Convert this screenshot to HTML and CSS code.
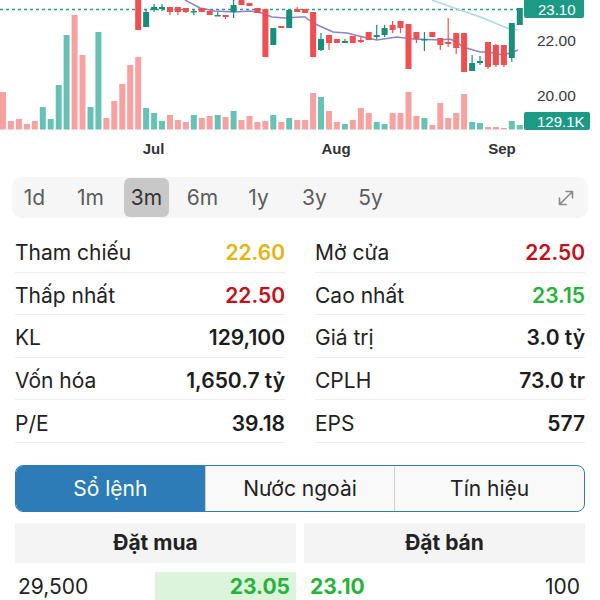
FILE: index.html
```html
<!DOCTYPE html>
<html lang="vi">
<head>
<meta charset="utf-8">
<title>Cổ phiếu</title>
<link rel="stylesheet" href="styles.css">
</head>
<body>
<div class="screen">
  <svg class="chart" viewBox="0 0 600 170" width="600" height="170">
    <g class="vol-down">
      <rect x="0" y="92" width="6" height="37.5"/>
      <rect x="7.9" y="121" width="6" height="8.5"/>
      <rect x="15.9" y="119" width="6" height="10.5"/>
      <rect x="23.9" y="124" width="6" height="5.5"/>
      <rect x="31.8" y="121" width="6" height="8.5"/>
      <rect x="71.6" y="15" width="6" height="114.5"/>
      <rect x="79.5" y="55" width="6" height="74.5"/>
      <rect x="103.4" y="118" width="6" height="11.5"/>
      <rect x="111.3" y="101" width="6" height="28.5"/>
      <rect x="119.3" y="84" width="6" height="45.5"/>
      <rect x="127.2" y="65" width="6" height="64.5"/>
      <rect x="135.2" y="57" width="6" height="72.5"/>
      <rect x="167" y="115" width="6" height="14.5"/>
      <rect x="174.9" y="120" width="6" height="9.5"/>
      <rect x="182.9" y="122" width="6" height="7.5"/>
      <rect x="198.8" y="118" width="6" height="11.5"/>
      <rect x="206.7" y="116" width="6" height="13.5"/>
      <rect x="222.6" y="117" width="6" height="12.5"/>
      <rect x="238.5" y="120" width="6" height="9.5"/>
      <rect x="246.5" y="116" width="6" height="13.5"/>
      <rect x="254.4" y="122" width="6" height="7.5"/>
      <rect x="262.4" y="121" width="6" height="8.5"/>
      <rect x="278.3" y="122" width="6" height="7.5"/>
      <rect x="294.2" y="120" width="6" height="9.5"/>
      <rect x="302.1" y="120" width="6" height="9.5"/>
      <rect x="310.1" y="93" width="6" height="36.5"/>
      <rect x="326" y="111" width="6" height="18.5"/>
      <rect x="333.9" y="122" width="6" height="7.5"/>
      <rect x="349.8" y="120" width="6" height="9.5"/>
      <rect x="357.8" y="108" width="6" height="21.5"/>
      <rect x="365.7" y="113" width="6" height="16.5"/>
      <rect x="389.6" y="113" width="6" height="16.5"/>
      <rect x="397.5" y="113" width="6" height="16.5"/>
      <rect x="405.5" y="92" width="6" height="37.5"/>
      <rect x="413.4" y="116" width="6" height="13.5"/>
      <rect x="429.3" y="125" width="6" height="4.5"/>
      <rect x="437.3" y="103" width="6" height="26.5"/>
      <rect x="445.2" y="118" width="6" height="11.5"/>
      <rect x="453.2" y="113" width="6" height="16.5"/>
      <rect x="461.1" y="94" width="6" height="35.5"/>
      <rect x="485" y="127" width="6" height="2.5"/>
      <rect x="492.9" y="127" width="6" height="2.5"/>
      <rect x="500.9" y="128" width="6" height="1.5"/>
    </g>
    <g class="vol-up">
      <rect x="39.8" y="107" width="6" height="22.5"/>
      <rect x="47.7" y="119" width="6" height="10.5"/>
      <rect x="55.7" y="85" width="6" height="44.5"/>
      <rect x="63.6" y="35" width="6" height="94.5"/>
      <rect x="87.5" y="107" width="6" height="22.5"/>
      <rect x="95.4" y="32" width="6" height="97.5"/>
      <rect x="143.1" y="108" width="6" height="21.5"/>
      <rect x="151.1" y="113" width="6" height="16.5"/>
      <rect x="159" y="121" width="6" height="8.5"/>
      <rect x="190.8" y="115" width="6" height="14.5"/>
      <rect x="214.7" y="115" width="6" height="14.5"/>
      <rect x="230.6" y="111" width="6" height="18.5"/>
      <rect x="270.3" y="115" width="6" height="14.5"/>
      <rect x="286.2" y="118" width="6" height="11.5"/>
      <rect x="318" y="97" width="6" height="32.5"/>
      <rect x="341.9" y="124" width="6" height="5.5"/>
      <rect x="373.7" y="122" width="6" height="7.5"/>
      <rect x="381.6" y="124" width="6" height="5.5"/>
      <rect x="421.4" y="118" width="6" height="11.5"/>
      <rect x="469.1" y="122" width="6" height="7.5"/>
      <rect x="477" y="123" width="6" height="6.5"/>
      <rect x="508.8" y="121" width="6" height="8.5"/>
      <rect x="516.8" y="125" width="6" height="4.5"/>
    </g>

    <line class="last-price" x1="0" y1="9.5" x2="522" y2="9.5"/>

    <polyline class="ma-slow" points="432,0 460,10 483,18 507,28 518,30"/>
    <polyline class="ma-fast" points="185,0 200,8 215,11 235,12 250,11 262,13 272,17 285,18 300,17 305,17 313,23 333,32 347,33 367,38 377,40 390,38 397,37 413,39 440,40 450,39 457,42 463,47 480,52 488,52 503,55 510,53 518,50"/>

    <g class="candle-down">
      <path class="wick" d="M170 7V15M177.9 7V15M185.9 8V13M225.6 15V19M297.2 7V12M329 43V50M360.8 37V43M392.6 21V33M400.5 21V33M416.4 32V43M440.3 38V50M448.2 18V47M456.2 33V54M488 42V69M495.9 44V67M503.9 45V67"/>
      <rect x="135.2" y="-5" width="6" height="35"/>
      <rect x="167" y="7" width="6" height="5"/>
      <rect x="174.9" y="7" width="6" height="5"/>
      <rect x="182.9" y="8" width="6" height="4"/>
      <rect x="198.8" y="8" width="6" height="4"/>
      <rect x="206.7" y="11" width="6" height="4"/>
      <rect x="222.6" y="15" width="6" height="2"/>
      <rect x="238.5" y="-2" width="6" height="7"/>
      <rect x="246.5" y="3" width="6" height="3"/>
      <rect x="254.4" y="8" width="6" height="5"/>
      <rect x="262.4" y="9" width="6" height="48"/>
      <rect x="278.3" y="26" width="6" height="2"/>
      <rect x="294.2" y="9" width="6" height="3"/>
      <rect x="302.1" y="9" width="6" height="4"/>
      <rect x="310.1" y="12" width="6" height="45"/>
      <rect x="326" y="35" width="6" height="8"/>
      <rect x="333.9" y="39" width="6" height="4"/>
      <rect x="349.8" y="36" width="6" height="7"/>
      <rect x="357.8" y="40" width="6" height="2"/>
      <rect x="365.7" y="32" width="6" height="8"/>
      <rect x="389.6" y="25" width="6" height="5"/>
      <rect x="397.5" y="21" width="6" height="7"/>
      <rect x="405.5" y="24" width="6" height="45"/>
      <rect x="413.4" y="32" width="6" height="7"/>
      <rect x="429.3" y="32" width="6" height="5"/>
      <rect x="437.3" y="38" width="6" height="7"/>
      <rect x="445.2" y="42" width="6" height="2"/>
      <rect x="453.2" y="33" width="6" height="15"/>
      <rect x="461.1" y="33" width="6" height="39"/>
      <rect x="485" y="42" width="6" height="25"/>
      <rect x="492.9" y="45" width="6" height="20"/>
      <rect x="500.9" y="45" width="6" height="20"/>
    </g>
    <g class="candle-up">
      <path class="wick" d="M146.1 10V27M154.1 4V12M162 4V11M193.8 9V15M217.7 12V16M233.6 0V18M321 33V51M344.9 39V43M376.7 25V39M384.6 25V37M424.4 32V51M472.1 55V71M480 56V65M511.8 23V62"/>
      <rect x="143.1" y="12" width="6" height="15"/>
      <rect x="151.1" y="7" width="6" height="3"/>
      <rect x="159" y="7" width="6" height="2"/>
      <rect x="190.8" y="11" width="6" height="1.5"/>
      <rect x="214.7" y="15" width="6" height="1.5"/>
      <rect x="230.6" y="5" width="6" height="7"/>
      <rect x="270.3" y="28" width="6" height="17"/>
      <rect x="286.2" y="10" width="6" height="18"/>
      <rect x="318" y="39" width="6" height="11"/>
      <rect x="341.9" y="41" width="6" height="2"/>
      <rect x="373.7" y="35" width="6" height="2"/>
      <rect x="381.6" y="28" width="6" height="7"/>
      <rect x="421.4" y="39" width="6" height="1.5"/>
      <rect x="469.1" y="63" width="6" height="8"/>
      <rect x="477" y="61" width="6" height="2"/>
      <rect x="508.8" y="23" width="6" height="35"/>
      <rect x="516.8" y="8" width="6" height="17"/>
    </g>

    <rect class="tag" x="524" y="-4" width="60" height="22" rx="2"/>
    <text class="axis-y tag-text" x="538" y="15">23.10</text>
    <text class="axis-y" x="537" y="45.5">22.00</text>
    <text class="axis-y" x="537" y="100.5">20.00</text>
    <rect class="tag" x="524" y="112" width="66" height="18" rx="2"/>
    <text class="axis-y tag-text" x="537" y="127">129.1K</text>

    <text class="axis-x" x="153.5" y="154" text-anchor="middle">Jul</text>
    <text class="axis-x" x="336" y="154" text-anchor="middle">Aug</text>
    <text class="axis-x" x="502" y="154" text-anchor="middle">Sep</text>
  </svg>

  <div class="ranges">
    <span class="range">1d</span>
    <span class="range">1m</span>
    <span class="range active">3m</span>
    <span class="range">6m</span>
    <span class="range">1y</span>
    <span class="range">3y</span>
    <span class="range">5y</span>
    <svg class="expand" viewBox="0 0 20 20" width="20" height="20">
      <path d="M3.5 16.5L16.5 3.5M10 3.5H16.5V10M3.5 10V16.5H10"/>
    </svg>
  </div>

  <div class="stats">
    <div class="stat"><span class="label">Tham chiếu</span><span class="value ref">22.60</span></div>
    <div class="stat"><span class="label">Mở cửa</span><span class="value down">22.50</span></div>
    <div class="stat"><span class="label">Thấp nhất</span><span class="value down">22.50</span></div>
    <div class="stat"><span class="label">Cao nhất</span><span class="value up">23.15</span></div>
    <div class="stat"><span class="label">KL</span><span class="value">129,100</span></div>
    <div class="stat"><span class="label">Giá trị</span><span class="value">3.0 tỷ</span></div>
    <div class="stat"><span class="label">Vốn hóa</span><span class="value">1,650.7 tỷ</span></div>
    <div class="stat"><span class="label">CPLH</span><span class="value">73.0 tr</span></div>
    <div class="stat"><span class="label">P/E</span><span class="value">39.18</span></div>
    <div class="stat"><span class="label">EPS</span><span class="value">577</span></div>
  </div>

  <div class="tabs">
    <div class="tab active">Sổ lệnh</div>
    <div class="tab">Nước ngoài</div>
    <div class="tab">Tín hiệu</div>
  </div>

  <div class="book">
    <div class="book-head">Đặt mua</div>
    <div class="book-head">Đặt bán</div>
    <div class="book-row bid">
      <span class="qty">29,500</span>
      <span class="bid-price" style="width:141px">23.05</span>
    </div>
    <div class="book-row ask">
      <span class="ask-price">23.10</span>
      <span class="qty">100</span>
    </div>
  </div>
</div>
</body>
</html>
```
FILE: styles.css
```css
* { box-sizing: border-box; }

body {
  margin: 0;
  background: #ffffff;
  font-family: Inter, "Liberation Sans", Arial, sans-serif;
  color: #222222;
}

.screen { width: 600px; }

/* chart */
.chart { display: block; width: 600px; height: 170px; overflow: hidden; }
.vol-down { fill: #f7a1a1; }
.vol-up { fill: #66c2b4; }
.candle-down { fill: #ef4f4f; }
.candle-down .wick { stroke: #ef4f4f; stroke-width: 1.2; fill: none; }
.candle-up { fill: #178f7c; }
.candle-up .wick { stroke: #178f7c; stroke-width: 1.2; fill: none; }
.last-price { stroke: #2a9d8a; stroke-width: 1.5; stroke-dasharray: 3 3; }
.ma-fast { fill: none; stroke: #8f82cc; stroke-width: 1.5; }
.ma-slow { fill: none; stroke: #a9d8ea; stroke-width: 1.5; }
.tag { fill: #1d9a86; }
.axis-y { font-family: "Liberation Sans", Arial, sans-serif; font-size: 15.5px; fill: #3a3a3a; }
.axis-y.tag-text { fill: #ffffff; font-size: 15px; }
.axis-x { font-family: "Liberation Sans", Arial, sans-serif; font-size: 15px; font-weight: 700; fill: #333333; }

/* period selector */
.ranges {
  display: flex;
  align-items: center;
  gap: 11px;
  height: 41px;
  margin: 7px 12px 0;
  background: #f6f6f6;
  border-radius: 10px;
}
.range {
  width: 45px;
  height: 39px;
  display: flex;
  align-items: center;
  justify-content: center;
  font-size: 21px;
  color: #5c5c5c;
  border-radius: 6px;
}
.range.active { background: #c8c8c8; color: #333333; }
.expand { margin-left: auto; margin-right: 12px; }
.expand path { fill: none; stroke: #8a8a8a; stroke-width: 1.6; stroke-linecap: round; stroke-linejoin: round; }

/* stats */
.stats {
  display: grid;
  grid-template-columns: 1fr 1fr;
  column-gap: 30px;
  margin: 12px 15px 0;
}
.stat {
  display: flex;
  justify-content: space-between;
  align-items: center;
  height: 42.6px;
  padding-top: 4px;
  border-bottom: 1px solid #ececec;
  font-size: 21px;
}
.label { color: #222222; }
.value { font-weight: 600; color: #1c1c1c; }
.value.ref { color: #e4b412; }
.value.down { color: #c3111c; }
.value.up { color: #27b23a; }

/* tabs */
.tabs {
  display: flex;
  height: 47px;
  margin: 22px 15px 0;
  border: 1px solid #2d7cb8;
  border-radius: 8px;
  overflow: hidden;
  background: #f9f9f9;
}
.tab {
  flex: 1;
  display: flex;
  align-items: center;
  justify-content: center;
  font-size: 21px;
  color: #222222;
}
.tab + .tab { border-left: 1px solid #cfcfcf; }
.tab.active { background: #2d7cb8; color: #ffffff; }

/* order book */
.book {
  display: grid;
  grid-template-columns: 1fr 1fr;
  column-gap: 8px;
  row-gap: 9px;
  margin: 11px 15px 0;
}
.book-head {
  height: 40px;
  background: #f4f4f4;
  display: flex;
  align-items: center;
  justify-content: center;
  font-size: 21px;
  font-weight: 700;
  color: #222222;
}
.book-row { display: flex; height: 30px; font-size: 21px; }
.qty { flex: 1; display: flex; align-items: center; color: #222222; }
.bid .qty { padding-left: 3px; }
.bid-price {
  display: flex;
  align-items: center;
  justify-content: flex-end;
  padding-right: 6px;
  background: #dcf4dc;
  font-weight: 700;
  color: #27b23a;
}
.ask-price {
  display: flex;
  align-items: center;
  padding-left: 6px;
  font-weight: 700;
  color: #27b23a;
}
.ask .qty { justify-content: flex-end; padding-right: 5px; }
```
